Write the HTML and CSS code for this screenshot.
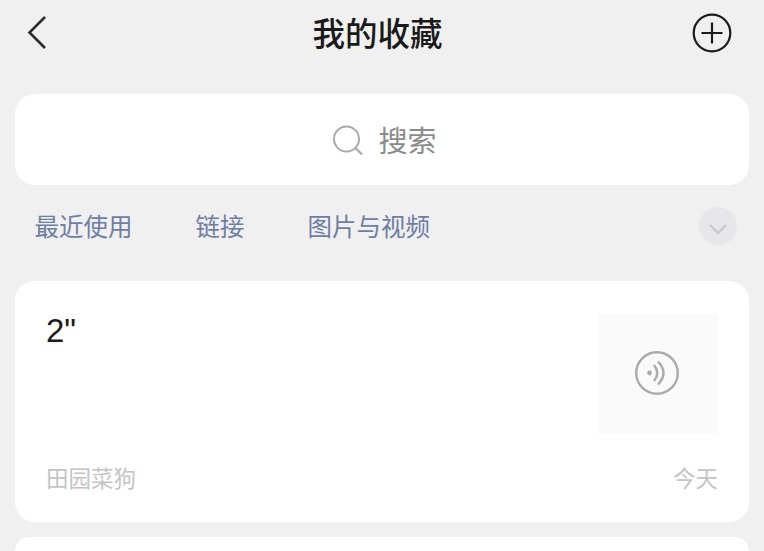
FILE: index.html
```html
<!DOCTYPE html>
<html lang="zh">
<head>
<meta charset="utf-8">
<title>我的收藏</title>
<link rel="stylesheet" href="styles.css">
</head>
<body>
<div class="page">
  <header class="nav">
    <svg class="back" width="22" height="36" viewBox="0 0 22 36"><path d="M19 2L3.500 17.500 19 33" fill="none" stroke="#2b2b2b" stroke-width="2.600"/></svg>
    <h1 class="title">我的收藏</h1>
    <svg class="add" width="40" height="40" viewBox="0 0 40 40"><circle cx="20" cy="20" r="18.300" fill="none" stroke="#1c1c1c" stroke-width="2.200"/><path d="M9.500 20H30.500M20 9.500V30.500" fill="none" stroke="#1c1c1c" stroke-width="2.200"/></svg>
  </header>
  <div class="search">
    <svg class="search-icon" width="32" height="32" viewBox="0 0 32 32"><circle cx="14.500" cy="14" r="12.500" fill="none" stroke="#ababab" stroke-width="2"/><path d="M23.500 23L30 29.500" fill="none" stroke="#ababab" stroke-width="2.400"/></svg>
    <span class="search-text">搜索</span>
  </div>
  <nav class="tabs">
    <span class="tab">最近使用</span>
    <span class="tab">链接</span>
    <span class="tab">图片与视频</span>
    <span class="more"><svg width="20" height="12" viewBox="0 0 20 12"><path d="M2 2L10 10 18 2" fill="none" stroke="#c8c8cb" stroke-width="2"/></svg></span>
  </nav>
  <article class="card">
    <div class="card-main">
      <div class="card-text">2"</div>
      <div class="thumb">
        <svg width="46" height="46" viewBox="0 0 46 46"><circle cx="23" cy="23" r="20.800" fill="none" stroke="#ababab" stroke-width="2.400"/><circle cx="15.500" cy="23" r="2.400" fill="#ababab"/><path d="M20 15Q26.500 23 20 31M24 11.500Q35 23 24 34.500" fill="none" stroke="#ababab" stroke-width="2.400"/></svg>
      </div>
    </div>
    <div class="card-foot">
      <span>田园菜狗</span>
      <span>今天</span>
    </div>
  </article>
  <article class="card-next"></article>
</div>
</body>
</html>
```

FILE: styles.css
```css
* { box-sizing: border-box; }
html, body { margin: 0; height: 100%; }
body {
  background: #f0f0f1;
  overflow: hidden;
  font-family: "Noto Sans CJK SC", "Liberation Sans", sans-serif;
}
.page { padding: 0 15px; height: 551px; overflow: hidden; }
.nav {
  height: 94px;
  display: flex;
  align-items: center;
  justify-content: space-between;
  padding: 0 17px 30px 11px;
}
.back { display: block; margin-top: 2px; }
.title {
  margin: 0 0 0 15px;
  font-size: 32.500px;
  line-height: 40px;
  font-weight: 500;
  color: #1a1a1a;
}
.add { display: block; margin-top: 2px; }
.search {
  height: 91px;
  background: #fff;
  border-radius: 20px;
  display: flex;
  align-items: center;
  justify-content: center;
  gap: 14px;
  padding-left: 5px;
}
.search-icon { margin-top: 2px; }
.search-text {
  font-size: 29px;
  line-height: 40px;
  color: #8b8b8b;
  margin-top: -2px;
}
.tabs {
  height: 96px;
  display: flex;
  align-items: center;
  gap: 63px;
  padding: 0 12px 14px 19.500px;
}
.tab {
  font-size: 24.500px;
  line-height: 34px;
  color: #6f7ea3;
}
.more {
  width: 38px;
  height: 38px;
  margin-left: auto;
  border-radius: 50%;
  background: #e7e7ea;
  display: flex;
  align-items: center;
  justify-content: center;
  padding-top: 6px;
}
.card {
  height: 241px;
  background: #fff;
  border-radius: 20px;
  padding: 33px 31px 0 31px;
}
.card-main {
  display: flex;
  justify-content: space-between;
  align-items: flex-start;
}
.card-text {
  font-family: "Liberation Sans", sans-serif;
  font-size: 33px;
  line-height: 34px;
  color: #1c1c1c;
}
.thumb {
  width: 120px;
  height: 120px;
  background: #fafafb;
  display: flex;
  align-items: center;
  justify-content: center;
  padding: 0 2px 2px 0;
}
.card-foot {
  display: flex;
  justify-content: space-between;
  margin-top: 27px;
  font-size: 22.500px;
  line-height: 32px;
  color: #c4c4c6;
}
.card-next {
  height: 14px;
  margin-top: 15px;
  background: #fff;
  border-radius: 20px 20px 0 0;
}
```
